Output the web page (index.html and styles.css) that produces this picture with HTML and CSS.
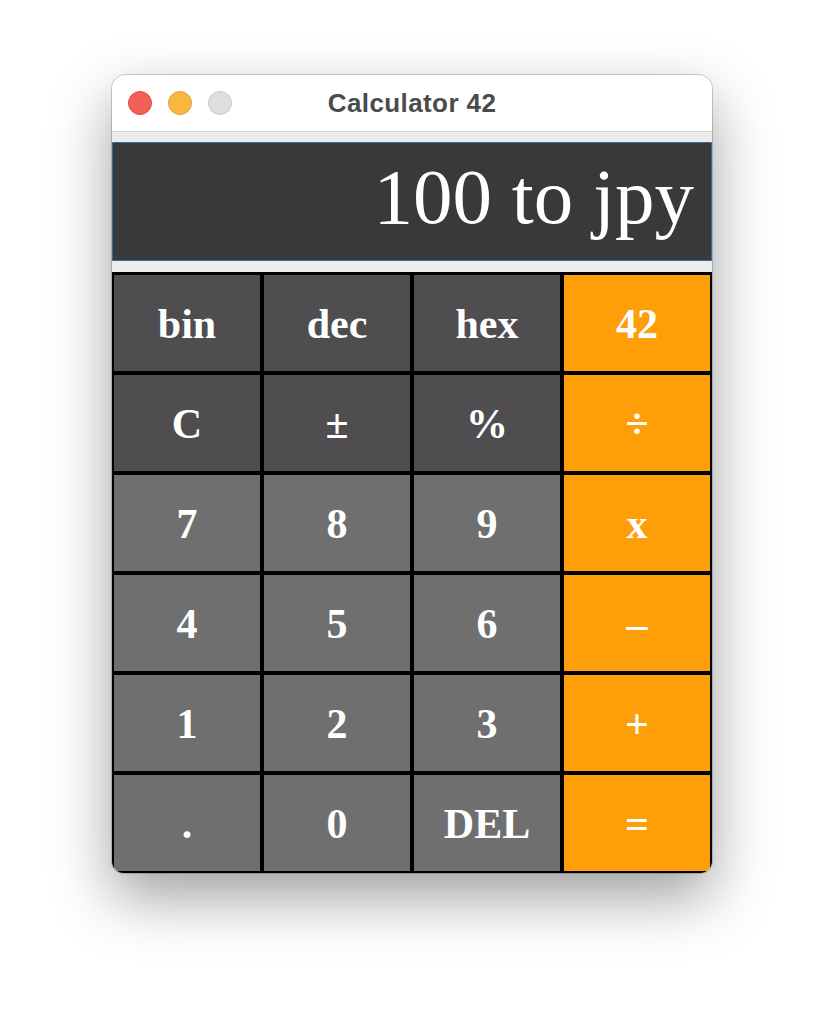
FILE: index.html
```html
<!DOCTYPE html>
<html>
<head>
<meta charset="utf-8">
<title>Calculator 42</title>
<link rel="stylesheet" href="styles.css">
</head>
<body>
<div class="window">
  <div class="titlebar">
    <div class="lights">
      <span class="light red"></span>
      <span class="light yellow"></span>
      <span class="light gray"></span>
    </div>
    <div class="title">Calculator 42</div>
    <div class="spacer"></div>
  </div>
  <div class="content">
    <div class="display">100 to jpy</div>
    <div class="keys">
      <div class="key fn">bin</div>
      <div class="key fn">dec</div>
      <div class="key fn">hex</div>
      <div class="key op">42</div>
      <div class="key fn">C</div>
      <div class="key fn">±</div>
      <div class="key fn">%</div>
      <div class="key op">÷</div>
      <div class="key num">7</div>
      <div class="key num">8</div>
      <div class="key num">9</div>
      <div class="key op">x</div>
      <div class="key num">4</div>
      <div class="key num">5</div>
      <div class="key num">6</div>
      <div class="key op">–</div>
      <div class="key num">1</div>
      <div class="key num">2</div>
      <div class="key num">3</div>
      <div class="key op">+</div>
      <div class="key num">.</div>
      <div class="key num">0</div>
      <div class="key num">DEL</div>
      <div class="key op">=</div>
    </div>
  </div>
</div>
</body>
</html>
```

FILE: styles.css
```css
html, body {
  margin: 0;
  padding: 0;
  background: #ffffff;
}

body {
  box-sizing: border-box;
  min-height: 1024px;
  padding-top: 75px;
  padding-left: 112px;
  font-family: "Liberation Serif", "Times New Roman", serif;
}

.window {
  width: 600px;
  border-radius: 14px 14px 12px 12px;
  overflow: hidden;
  background: #ececec;
  box-shadow: 0 0 0 1px rgba(0, 0, 0, 0.18), 0 24px 60px rgba(0, 0, 0, 0.38);
}

.titlebar {
  height: 56px;
  background: #ffffff;
  border-bottom: 1px solid #d2d2d2;
  display: grid;
  grid-template-columns: 1fr auto 1fr;
  align-items: center;
}

.lights {
  display: flex;
  gap: 16px;
  padding-left: 16px;
}

.light {
  width: 22px;
  height: 22px;
  border-radius: 50%;
  border: 1px solid transparent;
}

.light.red {
  background: #f25f57;
  border-color: #de4b43;
}

.light.yellow {
  background: #f8b840;
  border-color: #dfa036;
}

.light.gray {
  background: #dedede;
  border-color: #c9c9c9;
}

.title {
  font-family: "Liberation Sans", Arial, sans-serif;
  font-weight: bold;
  font-size: 26px;
  color: #4b4b4b;
  letter-spacing: 0.4px;
}

.content {
  padding-top: 10px;
  background: #ececec;
}

.display {
  height: 117px;
  background: #383939;
  border: 1px solid #3d6a9b;
  color: #ffffff;
  font-size: 79px;
  text-align: right;
  padding-right: 17px;
  line-height: 108px;
  white-space: nowrap;
}

.keys {
  margin-top: 11px;
  border-top: 1px solid #000;
  display: grid;
  grid-template-columns: repeat(4, 150px);
  grid-template-rows: repeat(6, 100px);
}

.key {
  box-sizing: border-box;
  border: 2px solid #000;
  display: flex;
  align-items: center;
  justify-content: center;
  color: #ffffff;
  font-weight: bold;
  font-size: 42px;
  padding-top: 2px;
}

.key.fn {
  background: #4f4d50;
}

.key.num {
  background: #6f6f6f;
}

.key.op {
  background: #fe9f0a;
}
```
